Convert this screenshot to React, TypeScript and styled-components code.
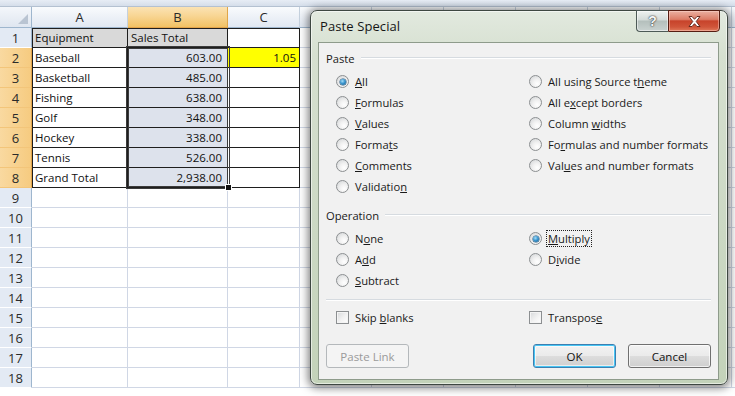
import React from "react";
import styled, { createGlobalStyle } from "styled-components";

const GlobalStyle = createGlobalStyle`
  html, body { margin: 0; padding: 0; background: #ffffff; }
  body { width: 735px; height: 396px; overflow: hidden; font-family: "Open Sans", "Liberation Sans", sans-serif; }
  #root { width: 735px; height: 396px; }
`;

const Screen = styled.div`
  position: relative;
  width: 735px;
  height: 396px;
  overflow: hidden;
  background: #ffffff;
`;

const TopStrip = styled.div`
  height: 6px;
  background: linear-gradient(180deg, #e7edf5, #d5deea);
  border-bottom: 1px solid #b4c1d1;
`;

const Sheet = styled.div`
  display: grid;
  grid-template-columns: 32px 96px 100px 72px repeat(7, 72px);
  grid-template-rows: 21px repeat(18, 20px);
  font-family: "Open Sans", "Liberation Sans", sans-serif;
  font-size: 11.5px;
  color: #111;
`;

type Pos = { $r: number; $c: number };

const Corner = styled.div<Pos>`
  grid-row: ${(p) => p.$r};
  grid-column: ${(p) => p.$c};
  box-sizing: border-box;
  background: linear-gradient(180deg, #f4f7fb, #dfe6f0);
  border-right: 1px solid #9eb6ce;
  border-bottom: 1px solid #9eb6ce;
  display: flex;
  align-items: flex-end;
  justify-content: flex-end;
  padding: 0 3px 3px 0;
`;

const ColHead = styled.div<Pos & { $sel?: boolean }>`
  grid-row: ${(p) => p.$r};
  grid-column: ${(p) => p.$c};
  box-sizing: border-box;
  display: flex;
  align-items: center;
  justify-content: center;
  font-size: 13px;
  color: #2a2a2a;
  background: ${(p) =>
    p.$sel
      ? "linear-gradient(180deg, #fbe3b4 0%, #f8d593 45%, #f2c264 100%)"
      : "linear-gradient(180deg, #f9fbfd 0%, #eef2f8 45%, #e1e8f2 100%)"};
  border-right: 1px solid ${(p) => (p.$sel ? "#e0a649" : "#c5d1de")};
  border-bottom: 1px solid ${(p) => (p.$sel ? "#e2a44a" : "#9eb6ce")};
`;

const RowHead = styled.div<Pos & { $sel?: boolean }>`
  grid-row: ${(p) => p.$r};
  grid-column: ${(p) => p.$c};
  box-sizing: border-box;
  display: flex;
  align-items: center;
  justify-content: center;
  font-size: 13px;
  color: #2a2a2a;
  background: ${(p) => (p.$sel ? "linear-gradient(90deg, #f9d9a0, #f6cb80)" : "#e3eaf4")};
  border-right: 1px solid ${(p) => (p.$sel ? "#e2a44a" : "#9eb6ce")};
  border-bottom: 1px solid ${(p) => (p.$sel ? "#f3c57a" : "#ffffff")};
`;

const Cell = styled.div<
  Pos & { $bg?: string; $right?: boolean; $boxed?: boolean; $top?: boolean; $left?: boolean; $pad?: number }
>`
  grid-row: ${(p) => p.$r};
  grid-column: ${(p) => p.$c};
  box-sizing: border-box;
  display: flex;
  align-items: center;
  justify-content: ${(p) => (p.$right ? "flex-end" : "flex-start")};
  padding: ${(p) => (p.$right ? `0 ${p.$pad ?? 5}px 0 0` : "0 0 0 3px")};
  background: ${(p) => p.$bg || "#ffffff"};
  border-right: 1px solid ${(p) => (p.$boxed ? "#1e1e1e" : "#d0d7e5")};
  border-bottom: 1px solid ${(p) => (p.$boxed ? "#1e1e1e" : "#d0d7e5")};
  box-shadow: ${(p) =>
    [p.$top ? "inset 0 1px 0 #1e1e1e" : "", p.$left ? "inset 1px 0 0 #1e1e1e" : ""].filter(Boolean).join(", ") ||
    "none"};
  white-space: nowrap;
  overflow: hidden;
`;

const Selection = styled.div`
  grid-column: 3 / 4;
  grid-row: 3 / 10;
  position: relative;
  margin: -2px -2px -1px -2px;
  border: 3px double #3b3b3b;
  pointer-events: none;
`;

const FillHandle = styled.div`
  position: absolute;
  right: -5px;
  bottom: -5px;
  width: 5px;
  height: 5px;
  background: #111;
  border: 1px solid #fff;
`;

/* ---------- Dialog ---------- */

const Dialog = styled.div`
  position: absolute;
  left: 310px;
  top: 10px;
  width: 418px;
  height: 375px;
  box-sizing: border-box;
  border: 1px solid #3e4741;
  border-radius: 7px;
  background: linear-gradient(180deg, #e2e9df 0%, #d6e0d0 12%, #cbd8c3 60%, #c3d2b9 100%);
  box-shadow: inset 0 0 0 1px rgba(255, 255, 255, 0.55), 0 1px 9px 2px rgba(0, 0, 0, 0.5);
  display: flex;
  flex-direction: column;
  font-family: "Open Sans", "Liberation Sans", sans-serif;
  color: #1a1a1a;
`;

const TitleBar = styled.div`
  height: 31px;
  display: flex;
  align-items: flex-start;
  padding-left: 9px;
  padding-right: 7px;
`;

const Title = styled.div`
  flex: 1;
  font-size: 13px;
  line-height: 31px;
  color: #151515;
  letter-spacing: 0.1px;
`;

const CaptionButtons = styled.div`
  display: flex;
  margin-top: -1px;
  height: 22px;
`;

const HelpButton = styled.div`
  box-sizing: border-box;
  width: 32px;
  height: 22px;
  border: 1px solid #4d5a57;
  border-right: none;
  border-bottom-left-radius: 4px;
  background: linear-gradient(180deg, #eef2f0 0%, #d3dbd9 45%, #b4bfbc 50%, #c9d2d0 100%);
  box-shadow: inset 0 0 0 1px rgba(255, 255, 255, 0.5);
  display: flex;
  align-items: center;
  justify-content: center;
  font-family: "Liberation Sans", sans-serif;
  font-weight: bold;
  font-size: 14px;
  color: #f4f6f5;
  text-shadow: 0 0 1px #333, 0 0 2px #333;
`;

const CloseButton = styled.div`
  box-sizing: border-box;
  width: 52px;
  height: 22px;
  border: 1px solid #561d12;
  border-bottom-right-radius: 4px;
  background: linear-gradient(180deg, #eab0a1 0%, #dc7c66 42%, #c7432b 50%, #d0553a 80%, #e07a5b 100%);
  box-shadow: inset 0 0 0 1px rgba(255, 220, 210, 0.45);
  display: flex;
  align-items: center;
  justify-content: center;
`;

const Panel = styled.div`
  flex: 1;
  margin: 0 8px 4px 7px;
  box-sizing: border-box;
  border: 1px solid #8e9b8b;
  background: #f1f1f1;
  padding: 7px 7px 0 7px;
  display: flex;
  flex-direction: column;
  font-size: 11.2px;
`;

const GroupHeader = styled.div<{ $mt?: number }>`
  display: flex;
  align-items: center;
  height: 16px;
  gap: 6px;
  margin-top: ${(p) => p.$mt ?? 0}px;
`;

const GroupLine = styled.div`
  flex: 1;
  height: 1px;
  background: #d6dbe0;
  border-bottom: 1px solid #ffffff;
`;

const Columns = styled.div`
  display: flex;
  padding-left: 10px;
  margin-top: 5px;
`;

const Column = styled.div`
  display: flex;
  flex-direction: column;
  flex: none;
  width: 193px;
  &:last-child {
    flex: 1;
    width: auto;
  }
`;

const Option = styled.div`
  display: flex;
  align-items: center;
  height: 21px;
  gap: 6px;
  white-space: nowrap;
`;

const Radio = styled.span<{ $on?: boolean }>`
  position: relative;
  box-sizing: border-box;
  width: 13px;
  height: 13px;
  border-radius: 50%;
  border: 1px solid #8c8f91;
  background: radial-gradient(circle at 65% 70%, #ffffff 0%, #f1f1f1 40%, #cfd2d4 100%);
  flex: none;
  &::after {
    content: "";
    display: ${(p) => (p.$on ? "block" : "none")};
    position: absolute;
    left: 2.5px;
    top: 2.5px;
    width: 6px;
    height: 6px;
    border-radius: 50%;
    background: radial-gradient(circle at 40% 35%, #a6def8 0%, #3b96cf 45%, #135584 100%);
    box-shadow: 0 0 0 0.5px #1d4f74;
  }
`;

const Check = styled.span`
  box-sizing: border-box;
  width: 13px;
  height: 13px;
  border: 1px solid #8c8f91;
  background: linear-gradient(135deg, #d6d8da 0%, #f2f2f2 55%, #ffffff 100%);
  box-shadow: inset 0 0 0 1px #f4f4f4;
  flex: none;
`;

const Label = styled.span<{ $focus?: boolean }>`
  padding: 0 1px;
  margin-left: -1px;
  outline: ${(p) => (p.$focus ? "1px dotted #222" : "none")};
  outline-offset: 0px;
  line-height: 15px;
`;

const Separator = styled.div`
  height: 1px;
  background: #d6dbe0;
  border-bottom: 1px solid #ffffff;
  margin-top: 8px;
`;

const CheckRow = styled.div`
  display: flex;
  padding-left: 10px;
  margin-top: 6px;
`;

const ButtonRow = styled.div`
  display: flex;
  margin-top: 16px;
  gap: 12px;
`;

const Spacer = styled.div`
  flex: 1;
`;

const Button = styled.div<{ $variant?: "default" | "disabled" | "normal" }>`
  box-sizing: border-box;
  width: 83px;
  height: 24px;
  border-radius: 3px;
  display: flex;
  align-items: center;
  justify-content: center;
  font-size: 11.5px;
  color: ${(p) => (p.$variant === "disabled" ? "#9a9a9a" : "#111")};
  border: 1px solid
    ${(p) => (p.$variant === "default" ? "#3c7fb1" : p.$variant === "disabled" ? "#b4b8bb" : "#707070")};
  background: ${(p) =>
    p.$variant === "disabled"
      ? "#f4f4f4"
      : "linear-gradient(180deg, #f2f2f2 0%, #ebebeb 48%, #dddddd 50%, #cfcfcf 100%)"};
  box-shadow: ${(p) =>
    p.$variant === "default"
      ? "inset 0 0 0 1px #48c6f4, inset 0 0 0 2px rgba(255,255,255,0.6)"
      : p.$variant === "disabled"
      ? "none"
      : "inset 0 0 0 1px rgba(255,255,255,0.7)"};
`;

/* ---------- data ---------- */

const rows: { a: string; b: string; c?: string }[] = [
  { a: "Equipment", b: "Sales Total" },
  { a: "Baseball", b: "603.00", c: "1.05" },
  { a: "Basketball", b: "485.00" },
  { a: "Fishing", b: "638.00" },
  { a: "Golf", b: "348.00" },
  { a: "Hockey", b: "338.00" },
  { a: "Tennis", b: "526.00" },
  { a: "Grand Total", b: "2,938.00" },
];

/* columns D onward sit behind the dialog; only their header strips show */
const colLetters = ["A", "B", "C", "", "", "", "", "", "", ""];

type Opt = { pre: string; key: string; post: string; on?: boolean; focus?: boolean };

const pasteLeft: Opt[] = [
  { pre: "", key: "A", post: "ll", on: true },
  { pre: "", key: "F", post: "ormulas" },
  { pre: "", key: "V", post: "alues" },
  { pre: "Forma", key: "t", post: "s" },
  { pre: "", key: "C", post: "omments" },
  { pre: "Validatio", key: "n", post: "" },
];
const pasteRight: Opt[] = [
  { pre: "All using Source t", key: "h", post: "eme" },
  { pre: "All e", key: "x", post: "cept borders" },
  { pre: "Column ", key: "w", post: "idths" },
  { pre: "Fo", key: "r", post: "mulas and number formats" },
  { pre: "Val", key: "u", post: "es and number formats" },
];
const opLeft: Opt[] = [
  { pre: "N", key: "o", post: "ne" },
  { pre: "A", key: "d", post: "d" },
  { pre: "", key: "S", post: "ubtract" },
];
const opRight: Opt[] = [
  { pre: "", key: "M", post: "ultiply", on: true, focus: true },
  { pre: "D", key: "i", post: "vide" },
];

const Text = ({ o }: { o: Opt }) => (
  <Label $focus={o.focus}>
    {o.pre}
    <u>{o.key}</u>
    {o.post}
  </Label>
);

const RadioList = ({ items }: { items: Opt[] }) => (
  <Column>
    {items.map((o, i) => (
      <Option key={i}>
        <Radio $on={o.on} />
        <Text o={o} />
      </Option>
    ))}
  </Column>
);

export default function App() {
  const gridCells: React.ReactNode[] = [];
  gridCells.push(
    <Corner key="corner" $r={1} $c={1}>
      <svg width="10" height="10" viewBox="0 0 10 10">
        <polygon points="10,0 10,10 0,10" fill="#b9c4d2" />
      </svg>
    </Corner>
  );
  colLetters.forEach((l, i) =>
    gridCells.push(
      <ColHead key={"h" + i} $r={1} $c={i + 2} $sel={i === 1}>
        {l}
      </ColHead>
    )
  );

  for (let r = 1; r <= 18; r++) {
    const gr = r + 1;
    const data = rows[r - 1];
    gridCells.push(
      <RowHead key={"r" + r} $r={gr} $c={1} $sel={r >= 2 && r <= 8}>
        {r}
      </RowHead>
    );
    const boxed = r <= 8;
    gridCells.push(
      <Cell
        key={"a" + r}
        $r={gr}
        $c={2}
        $boxed={boxed}
        $top={r === 1}
        $left={boxed}
        $bg={r === 1 ? "#d9d9d9" : "#ffffff"}
      >
        {data ? data.a : ""}
      </Cell>
    );
    gridCells.push(
      <Cell
        key={"b" + r}
        $r={gr}
        $c={3}
        $boxed={boxed}
        $top={r === 1}
        $right={r > 1}
        $bg={r === 1 ? "#d9d9d9" : boxed ? "#dde2ec" : "#ffffff"}
      >
        {data ? data.b : ""}
      </Cell>
    );
    gridCells.push(
      <Cell
        key={"c" + r}
        $r={gr}
        $c={4}
        $boxed={boxed}
        $top={r === 1}
        $right
        $pad={3}
        $bg={r === 2 ? "#ffff00" : "#ffffff"}
      >
        {data && data.c ? data.c : ""}
      </Cell>
    );
    for (let c = 5; c <= 11; c++) gridCells.push(<Cell key={"x" + r + "-" + c} $r={gr} $c={c} />);
  }

  return (
    <Screen>
      <GlobalStyle />
      <TopStrip />
      <Sheet>
        {gridCells}
        <Selection>
          <FillHandle />
        </Selection>
      </Sheet>

      <Dialog>
        <TitleBar>
          <Title>Paste Special</Title>
          <CaptionButtons>
            <HelpButton>?</HelpButton>
            <CloseButton>
              <svg width="15" height="13" viewBox="0 0 15 13">
                <path
                  d="M2 1.5 L5 1.5 L7.5 4.3 L10 1.5 L13 1.5 L9.2 6.5 L13 11.5 L10 11.5 L7.5 8.7 L5 11.5 L2 11.5 L5.8 6.5 Z"
                  fill="#ffffff"
                  stroke="#5a1f14"
                  strokeWidth="0.9"
                  strokeLinejoin="round"
                />
              </svg>
            </CloseButton>
          </CaptionButtons>
        </TitleBar>
        <Panel>
          <GroupHeader>
            <span>Paste</span>
            <GroupLine />
          </GroupHeader>
          <Columns>
            <RadioList items={pasteLeft} />
            <RadioList items={pasteRight} />
          </Columns>

          <GroupHeader $mt={10}>
            <span>Operation</span>
            <GroupLine />
          </GroupHeader>
          <Columns>
            <RadioList items={opLeft} />
            <RadioList items={opRight} />
          </Columns>

          <Separator />

          <CheckRow>
            <Column>
              <Option>
                <Check />
                <Label>
                  Skip <u>b</u>lanks
                </Label>
              </Option>
            </Column>
            <Column>
              <Option>
                <Check />
                <Label>
                  Transpos<u>e</u>
                </Label>
              </Option>
            </Column>
          </CheckRow>

          <ButtonRow>
            <Button $variant="disabled">Paste Link</Button>
            <Spacer />
            <Button $variant="default">OK</Button>
            <Button $variant="normal">Cancel</Button>
          </ButtonRow>
        </Panel>
      </Dialog>
    </Screen>
  );
}
